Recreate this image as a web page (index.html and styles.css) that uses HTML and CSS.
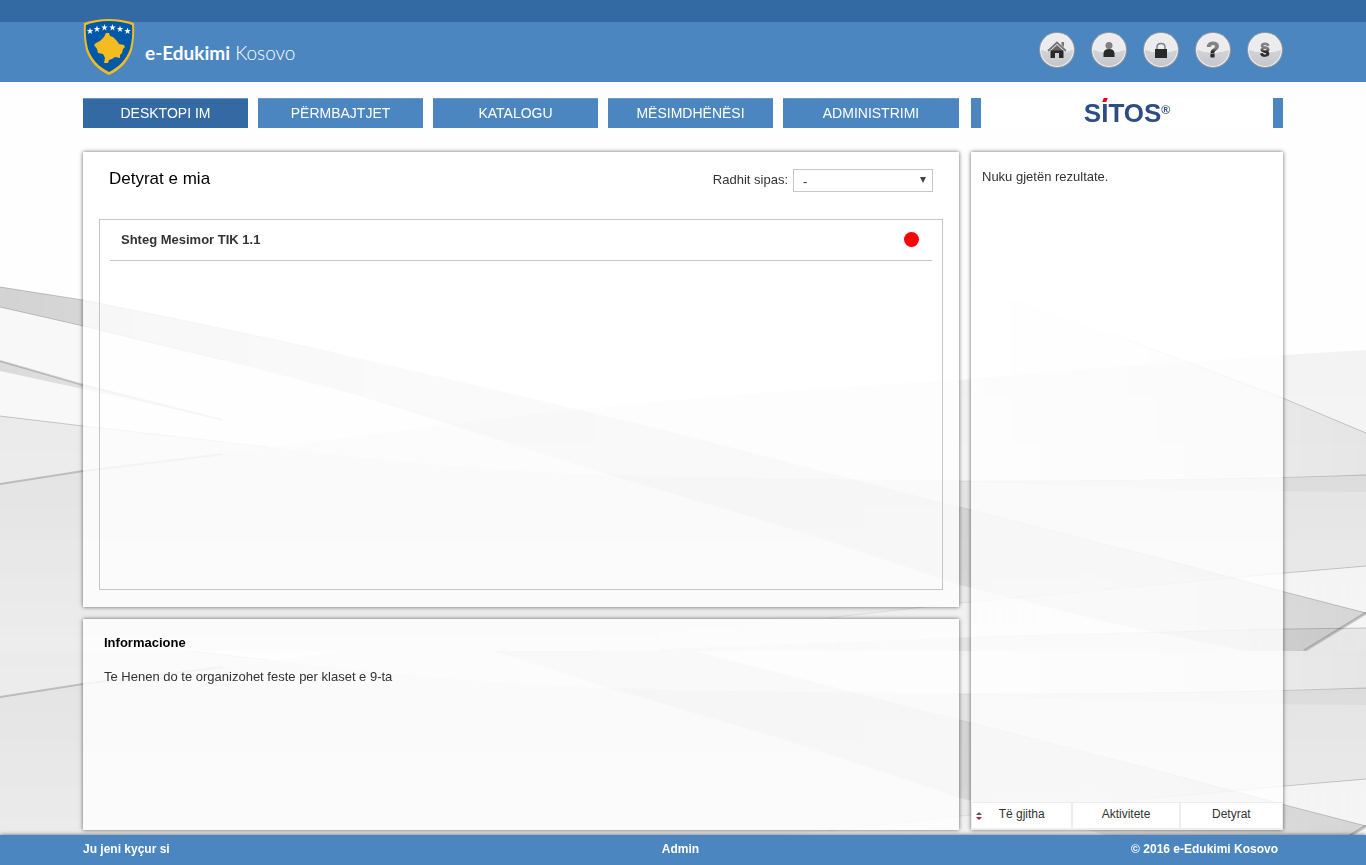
FILE: index.html
```html
<!DOCTYPE html>
<html lang="sq">
<head>
<meta charset="utf-8">
<meta name="viewport" content="width=device-width, initial-scale=1">
<title>e-Edukimi Kosovo</title>
<link rel="stylesheet" href="styles.css">
</head>
<body>
<svg class="backdrop" viewBox="0 0 1366 865" preserveAspectRatio="none" aria-hidden="true">
  <defs>
    <linearGradient id="g-mist" x1="0" y1="0" x2="0" y2="1"><stop offset="0" stop-color="#000" stop-opacity=".045"/><stop offset="1" stop-color="#000" stop-opacity=".02"/></linearGradient>
    <linearGradient id="g-base" gradientUnits="userSpaceOnUse" x1="0" y1="416" x2="0" y2="651"><stop offset="0" stop-color="#000" stop-opacity=".055"/><stop offset="1" stop-color="#000" stop-opacity=".025"/></linearGradient>
    <linearGradient id="g-band" gradientUnits="userSpaceOnUse" x1="0" y1="0" x2="1366" y2="0"><stop offset="0" stop-color="#000" stop-opacity=".17"/><stop offset=".3" stop-color="#000" stop-opacity=".1"/><stop offset=".8" stop-color="#000" stop-opacity=".07"/><stop offset="1" stop-color="#000" stop-opacity=".13"/></linearGradient>
    <linearGradient id="g-left" gradientUnits="userSpaceOnUse" x1="0" y1="0" x2="400" y2="0"><stop offset="0" stop-color="#000" stop-opacity=".12"/><stop offset="1" stop-color="#000" stop-opacity="0"/></linearGradient>
    <linearGradient id="g-right" gradientUnits="userSpaceOnUse" x1="940" y1="0" x2="1366" y2="0"><stop offset="0" stop-color="#000" stop-opacity="0"/><stop offset="1" stop-color="#000" stop-opacity=".06"/></linearGradient>
    <linearGradient id="g-light" gradientUnits="userSpaceOnUse" x1="660" y1="0" x2="1366" y2="0"><stop offset="0" stop-color="#fff" stop-opacity=".2"/><stop offset="1" stop-color="#fff" stop-opacity=".5"/></linearGradient>
    <linearGradient id="g-edge" gradientUnits="userSpaceOnUse" x1="0" y1="0" x2="1366" y2="0"><stop offset="0" stop-color="#000" stop-opacity=".2"/><stop offset=".4" stop-color="#000" stop-opacity=".04"/><stop offset=".8" stop-color="#000" stop-opacity=".08"/><stop offset="1" stop-color="#000" stop-opacity=".2"/></linearGradient>
    <clipPath id="c-first"><rect x="0" y="0" width="1366" height="651"/></clipPath>
    <clipPath id="c-second"><rect x="0" y="438" width="1366" height="213"/></clipPath>
    <g id="waves" fill="none">
      <path fill="#000" fill-opacity=".025" d="M0 307 83 326Q223 360 357 395T446 423L603 473 700 478 960 481Q1180 481 1366 475V651H0Z"/>
      <path fill="url(#g-mist)" d="M0 484 83 471Q223 454 446 425T960 380Q1160 362 1366 350V651H0Z"/>
      <path fill="url(#g-base)" d="M0 416 83 426 268 447Q480 474 700 478T960 481Q1180 481 1366 475V651H0Z"/>
      <path fill="url(#g-left)" d="M0 361 83 385 223 420 83 389 0 371Z"/>
      <path fill="url(#g-right)" d="M960 280Q1110 333 1285 399L1366 433V475L960 481Z"/>
      <path fill="#000" fill-opacity=".035" d="M960 481Q1180 481 1366 475V492Q1180 492 960 481Z"/>
      <path fill="url(#g-light)" d="M660 633 827 618 960 603 1110 588 1285 573 1366 566V651H660Z"/>
      <path fill="url(#g-band)" d="M0 287 83 300Q223 328 335 353T580 410L660 429 795 464 960 507 1155 557 1285 592 1366 613 1304 651H1245L1110 623 960 585 795 530 603 473 446 423 357 395 223 360 83 326 0 307Z"/>
      <path fill="#000" fill-opacity=".06" d="M1366 628 1285 629 975 637 660 649V651H1366Z"/>
      <g stroke="url(#g-edge)">
        <path d="M0 287 83 300Q223 328 335 353"/>
        <path d="M0 307 83 326 223 360"/>
        <path d="M0 361 83 385 223 420" stroke-width="2"/>
        <path d="M0 416 83 426 268 447"/>
        <path d="M0 484 83 471 223 454" stroke-width="2"/>
        <path d="M700 478 960 481Q1180 481 1366 475"/>
        <path d="M1110 333 1285 399 1366 433"/>
        <path d="M827 618 960 603 1285 573 1366 566"/>
        <path d="M960 507 1155 557 1285 592 1366 613"/>
        <path d="M1366 613 1304 651" stroke-width="3"/>
        <path d="M1366 628 1285 629 975 637"/>
      </g>
    </g>
  </defs>
  <g clip-path="url(#c-first)"><use href="#waves"/></g>
  <g transform="translate(0 213)"><g clip-path="url(#c-second)"><use href="#waves"/></g></g>
</svg>

<header class="header">
  <div class="wrap header-row">
    <a class="brand" href="#">
      <svg class="crest" viewBox="0 0 52 56" aria-hidden="true">
        <path fill="#f4bc1f" d="M26 0Q39 0 51 4 52 18 49 31C45 43 37 51 26 56 15 51 7 43 3 31Q0 18 1 4 13 0 26 0Z"/>
        <path fill="#0059a8" d="M26 2Q38 2 49 6 50 18 47 30C43 41 36 48 26 53 16 48 9 41 5 30Q2 18 3 6 14 2 26 2Z"/>
        <path fill="#f4bc1f" d="M23 14H26L27 17 30 18 34 22 36 25 41 26 42 28 40 30 39 34 37 36 37 39 32 38 29 40 26 41 25 44H21L22 39 20 35 15 34 14 30 11 26 13 24 17 22 21 18Z"/>
        <g fill="#fff"><path id="star" d="M7 8.500 7.800 11H10.300L8.300 12.500 9 15 7 13.500 5 15 5.700 12.500 3.700 11H6.200Z"/><use href="#star" x="7" y="-2"/><use href="#star" x="14.500" y="-3.500"/><use href="#star" x="22.500" y="-3.500"/><use href="#star" x="30" y="-2"/><use href="#star" x="37.500"/></g>
      </svg>
      <span class="brand-name"><b>e-Edukimi</b> Kosovo</span>
    </a>
    <nav class="tools" aria-label="Mjete">
      <a href="#" aria-label="Ballina"><svg viewBox="0 0 34 34" aria-hidden="true"><path fill="none" stroke="#777" stroke-width="1.800" d="M8 18 17 9.500 26 18"/><path fill="#777" d="M21.500 9H24V14L21.500 12Z"/><path fill="#666" d="M17 12 23.500 18H10.500Z"/><path fill="#292929" d="M10.500 17.500H23.500V25H19V20H15V25H10.500Z"/></svg></a>
      <a href="#" aria-label="Profili"><svg viewBox="0 0 34 34" aria-hidden="true"><circle cx="17" cy="12.500" r="3.500" fill="#808080"/><path fill="#292929" d="M11.500 24V20Q12 16 17 16T22.500 20V24Z"/></svg></a>
      <a href="#" aria-label="Dil"><svg viewBox="0 0 34 34" aria-hidden="true"><path fill="none" stroke="#808080" stroke-width="1.500" d="M13 17V14Q13 10.500 17 10.500T21 14V17"/><path fill="#292929" d="M11 16H23V25H11Z"/></svg></a>
      <a class="glyph" href="#" aria-label="Ndihma"><span>?</span></a>
      <a class="glyph glyph-small" href="#" aria-label="Kushtet"><span>§</span></a>
    </nav>
  </div>
</header>

<div class="wrap layout">
  <nav class="menu" aria-label="Menyja">
    <a class="active" href="#">DESKTOPI IM</a>
    <a href="#">PËRMBAJTJET</a>
    <a href="#">KATALOGU</a>
    <a href="#">MËSIMDHËNËSI</a>
    <a href="#">ADMINISTRIMI</a>
  </nav>
  <div class="partner"><span class="sitos">S<span class="sitos-i">I</span>TOS<small>®</small></span></div>

  <main class="content">
    <section class="panel tasks">
      <div class="tasks-head">
        <h1>Detyrat e mia</h1>
        <div class="sort">
          <label for="sort">Radhit sipas:</label>
          <span class="select"><select id="sort"><option>-</option></select></span>
        </div>
      </div>
      <ul class="task-list">
        <li><a href="#">Shteg Mesimor TIK 1.1</a><span class="status" role="img" aria-label="E papërfunduar"></span></li>
      </ul>
    </section>
    <section class="panel info">
      <h2>Informacione</h2>
      <p>Te Henen do te organizohet feste per klaset e 9-ta</p>
    </section>
  </main>

  <aside class="panel results">
    <p>Nuku gjetën rezultate.</p>
    <div class="filters">
      <button type="button"><svg class="sorter" viewBox="0 0 6 8" aria-hidden="true"><path fill="#555" d="M3 0 6 3H0Z"/><path fill="#c8102e" d="M0 5H6L3 8Z"/></svg>Të gjitha</button>
      <button type="button">Aktivitete</button>
      <button type="button">Detyrat</button>
    </div>
  </aside>
</div>

<footer class="footer">
  <div class="wrap footer-row">
    <span>Ju jeni kyçur si</span>
    <span>Admin</span>
    <span>© 2016 e-Edukimi Kosovo</span>
  </div>
</footer>
</body>
</html>
```

FILE: styles.css
```css
* { box-sizing: border-box; }

body {
  margin: 0;
  min-height: 100vh;
  display: flex;
  flex-direction: column;
  background: #fefefe;
  color: #333;
  font: 13px/18px "Liberation Sans", Arial, sans-serif;
}

a { color: inherit; text-decoration: none; }
h1, h2, p, ul { margin: 0; padding: 0; }

.backdrop {
  position: fixed;
  inset: 0;
  width: 100%;
  height: 100%;
  z-index: -1;
}

.wrap {
  width: 100%;
  max-width: 1200px;
  margin: 0 auto;
}

.header {
  border-top: 22px solid #336aa4;
  background: #4c86c1;
}

.header-row {
  display: flex;
  justify-content: space-between;
  align-items: center;
  height: 60px;
}

.brand {
  display: flex;
  align-items: center;
  gap: 10px;
  color: #fff;
}

.crest {
  width: 52px;
  height: 56px;
  margin-top: -10px;
}

.brand-name {
  padding-top: 2px;
  font: 300 19px/24px Lato, sans-serif;
}

.brand-name b { font-weight: 700; }

.tools {
  display: flex;
  gap: 16px;
  margin-top: -4px;
}

.tools a {
  width: 36px;
  height: 36px;
  border: 1px solid #999;
  border-radius: 50%;
  background: radial-gradient(ellipse 30px 20px at 50% 0, #ececee 98%, transparent), linear-gradient(#e2e3e6, #c3c5cb);
  box-shadow: inset 0 0 0 1px #f4f4f4;
}

.tools svg { display: block; width: 34px; height: 34px; }

.tools .glyph {
  display: flex;
  align-items: center;
  justify-content: center;
  font-size: 22px;
  font-weight: 700;
  line-height: 34px;
}

.tools .glyph-small { font-size: 17px; }

.glyph span {
  color: transparent;
  background: linear-gradient(#808080 45%, #292929 55%);
  background-clip: text;
  -webkit-background-clip: text;
  -webkit-text-stroke: 1px transparent;
}

.layout {
  flex: 1;
  display: grid;
  grid-template-columns: 876fr 312fr;
  grid-template-rows: 30px 1fr;
  gap: 24px 12px;
  padding: 16px 0 5px;
}

.menu {
  display: grid;
  grid-template-columns: repeat(4, 165fr) 176fr;
  gap: 10px;
}

.menu a {
  border-top: 1px solid #6d97c5;
  background: #4c86c1;
  color: #fff;
  font-size: 14px;
  line-height: 29px;
  text-align: center;
}

.menu .active { background: #336aa4; }

.partner {
  display: flex;
  justify-content: center;
  border: solid #4c86c1;
  border-width: 0 10px;
  background: #fff;
}

.sitos {
  color: #2d4e80;
  font-size: 26px;
  font-weight: 700;
  line-height: 30px;
}

.sitos small {
  font-size: 12px;
  vertical-align: 8px;
  line-height: 12px;
}

.sitos-i { position: relative; }

.sitos-i::before {
  content: "";
  position: absolute;
  left: 2px;
  top: 0;
  width: 4px;
  height: 4px;
  background: #e2001a;
  transform: skewX(-20deg);
}

.content {
  display: grid;
  grid-template-rows: 455fr 211fr;
  gap: 12px;
}

.panel {
  background: rgba(255, 255, 255, .8);
  box-shadow: 0 0 4px rgba(0, 0, 0, .6);
}

.tasks {
  display: flex;
  flex-direction: column;
  padding: 16px 16px 17px;
}

.tasks-head {
  display: flex;
  justify-content: space-between;
  height: 51px;
  padding: 0 10px;
}

h1 {
  color: #000;
  font-size: 17px;
  font-weight: 400;
  line-height: 22px;
}

.sort {
  display: flex;
  gap: 5px;
  line-height: 24px;
}

.select { position: relative; }

.select::after {
  content: "";
  position: absolute;
  right: 7px;
  top: 9px;
  border: solid transparent;
  border-width: 6px 3px 0;
  border-top-color: #444;
  pointer-events: none;
}

select {
  display: block;
  width: 140px;
  height: 23px;
  margin-top: 1px;
  padding: 0 9px;
  appearance: none;
  border: 1px solid #c6c6c6;
  border-radius: 0;
  background: #fff;
  color: #333;
  font: inherit;
}

.task-list {
  flex: 1;
  padding: 0 10px;
  border: 1px solid #c6c6c6;
  list-style: none;
}

.task-list li {
  display: flex;
  justify-content: space-between;
  align-items: center;
  height: 41px;
  padding: 0 13px 1px 11px;
  border-bottom: 1px solid #c6c6c6;
  font-weight: 700;
}

.status {
  width: 15px;
  height: 15px;
  border-radius: 50%;
  background: #f00;
}

.info { padding: 15px 21px; }

h2 {
  margin-bottom: 16px;
  color: #000;
  font-size: 13px;
  line-height: 18px;
}

.results {
  display: flex;
  flex-direction: column;
  justify-content: space-between;
}

.results p { padding: 16px 11px; }

.filters {
  display: grid;
  grid-template-columns: 100fr 106fr 102fr;
  gap: 2px;
  padding: 1px 1px 2px;
  background: #eee;
}

.filters button {
  position: relative;
  height: 25px;
  padding: 0 0 2px;
  border: 0;
  background: #fff;
  color: #333;
  font: 12px/23px "Liberation Sans", Arial, sans-serif;
}

.sorter {
  position: absolute;
  left: 4px;
  top: 9px;
  width: 6px;
  height: 8px;
}

.footer {
  background: #4c86c1;
  box-shadow: 0 0 4px rgba(0, 0, 0, .6);
  color: #fff;
  font-size: 12px;
  font-weight: 700;
}

.footer-row {
  display: grid;
  grid-template-columns: 1fr auto 1fr;
  padding: 5px 5px 7px 0;
}

.footer-row span:last-child { text-align: right; }
```
